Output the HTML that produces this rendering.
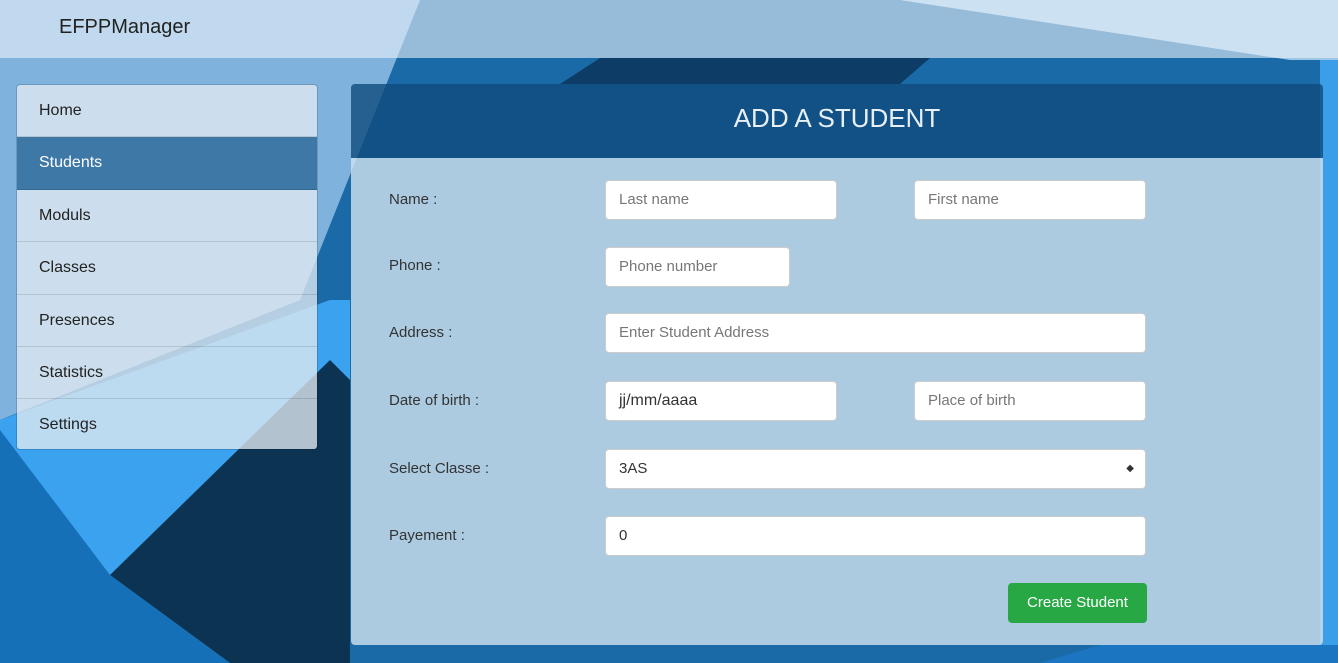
<!DOCTYPE html>
<html><head><style>
*{box-sizing:border-box;margin:0;padding:0}
html,body{width:1338px;height:663px;overflow:hidden}
body{position:relative;font-family:"Liberation Sans",sans-serif;background:#1a6fb0}
svg.bg{position:absolute;left:0;top:0;display:block}
.nav{position:absolute;left:0;top:0;width:1338px;height:58px;background:rgba(235,243,250,0.6)}
.brand{position:absolute;left:59px;top:16px;font-size:20px;color:#222}
.side{position:absolute;left:16px;top:84px;width:302px;height:366px;border:1px solid rgba(0,0,0,0.15);border-radius:4px;overflow:hidden}
.side div{height:52.4px;line-height:52px;padding-left:22px;font-size:16px;color:#222;background:rgba(225,235,242,0.78);border-bottom:1px solid rgba(0,0,0,0.12)}
.side div.act{background:rgba(40,100,150,0.75);color:#fff}
.card{position:absolute;left:351px;top:84px;width:972px;height:561px;border-radius:4px;overflow:hidden}
.ch{height:74px;background:rgba(15,75,125,0.8);color:#e8f0f6;font-size:26px;text-align:center;line-height:68px}
.cb{position:absolute;top:74px;left:0;right:0;bottom:0;background:rgba(205,225,238,0.82)}
.l{position:absolute;left:38px;font-size:15px;color:#333}
.i{position:absolute;height:40px;background:#fff;border:1px solid #ccc;border-radius:4px;font-size:15px;color:#777;padding-left:13px;line-height:38px}
.btn{position:absolute;left:657px;top:425px;width:139px;height:40px;background:#28a745;border-radius:4px;color:#fff;font-size:15px;text-align:center;line-height:40px}
</style></head><body>
<svg class="bg" width="1338" height="663">
<rect width="1338" height="663" fill="#1b6aa8"/>
<polygon points="0,0 420,0 300,300 0,420" fill="#7fb2dc"/>
<polygon points="330,300 350,300 350,663 0,663 0,420" fill="#3aa2ee"/>
<polygon points="110,575 330,360 350,380 350,663 230,663" fill="#0c3352"/>
<polygon points="0,430 110,575 230,663 0,663" fill="#1670b8"/>
<polygon points="900,0 1338,0 1338,60 1290,60" fill="#9fc6e4"/>
<polygon points="1320,60 1338,60 1338,663 1320,663" fill="#3a9fe8"/>
<polygon points="600,58 930,58 900,84 560,84" fill="#0d3d66"/>
<polygon points="1100,645 1338,645 1338,663 1040,663" fill="#1c75c0"/>
</svg>
<div class="nav"></div>
<div class="brand">EFPPManager</div>
<div class="side">
<div>Home</div><div class="act">Students</div><div>Moduls</div><div>Classes</div><div>Presences</div><div>Statistics</div><div>Settings</div>
</div>
<div class="card">
<div class="ch">ADD A STUDENT</div>
<div class="cb">
<div class="l" style="top:33px">Name :</div>
<div class="i" style="left:254px;top:22px;width:232px">Last name</div>
<div class="i" style="left:563px;top:22px;width:232px">First name</div>
<div class="l" style="top:99px">Phone :</div>
<div class="i" style="left:254px;top:89px;width:185px">Phone number</div>
<div class="l" style="top:166px">Address :</div>
<div class="i" style="left:254px;top:155px;width:541px">Enter Student Address</div>
<div class="l" style="top:234px">Date of birth :</div>
<div class="i" style="left:254px;top:223px;width:232px;color:#333;font-size:16px">jj/mm/aaaa</div>
<div class="i" style="left:563px;top:223px;width:232px">Place of birth</div>
<div class="l" style="top:302px">Select Classe :</div>
<div class="i" style="left:254px;top:291px;width:541px;color:#333">3AS<span style="position:absolute;right:11px;top:0;font-size:10px;line-height:38px">&#9670;</span></div>
<div class="l" style="top:369px">Payement :</div>
<div class="i" style="left:254px;top:358px;width:541px;color:#333">0</div>
<div class="btn">Create Student</div>
</div>
</div>
</body></html>
